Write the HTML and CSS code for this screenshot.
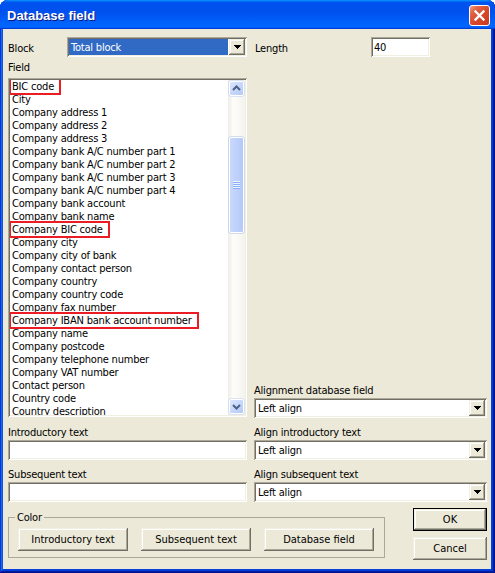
FILE: index.html
```html
<!DOCTYPE html>
<html>
<head>
<meta charset="utf-8">
<title>Database field</title>
<link rel="stylesheet" href="styles.css">
</head>
<body>
<div class="window">
  <div class="titlebar">
    <span class="title">Database field</span>
    <span class="close"><svg width="19" height="19" viewBox="0 0 19 19"><path d="M5.5 5.5L13.5 13.5M13.5 5.5L5.5 13.5" stroke="#fff" stroke-width="2.3" stroke-linecap="square" fill="none"/></svg></span>
  </div>
  <div class="body">
    <div class="grid">
      <div class="cell row-top">
        <span class="label block-label">Block</span>
        <div class="combo block-combo"><span class="combo-text sel">Total block</span><span class="drop"><svg width="7" height="4" viewBox="0 0 7 4" shape-rendering="crispEdges"><path d="M0 0h7v1h-1v1h-1v1h-1v1h-1v-1h-1v-1h-1v-1h-1z"/></svg></span></div>
      </div>
      <div class="cell row-top">
        <span class="label length-label">Length</span>
        <div class="edit length-edit">40</div>
      </div>

      <div class="cell field-cell">
        <span class="label">Field</span>
        <div class="list">
          <div class="items">
            <div class="item"><span class="mark">BIC code</span></div>
            <div class="item">City</div>
            <div class="item">Company address 1</div>
            <div class="item">Company address 2</div>
            <div class="item">Company address 3</div>
            <div class="item">Company bank A/C number part 1</div>
            <div class="item">Company bank A/C number part 2</div>
            <div class="item">Company bank A/C number part 3</div>
            <div class="item">Company bank A/C number part 4</div>
            <div class="item">Company bank account</div>
            <div class="item">Company bank name</div>
            <div class="item"><span class="mark">Company BIC code</span></div>
            <div class="item">Company city</div>
            <div class="item">Company city of bank</div>
            <div class="item">Company contact person</div>
            <div class="item">Company country</div>
            <div class="item">Company country code</div>
            <div class="item">Company fax number</div>
            <div class="item"><span class="mark">Company IBAN bank account number</span></div>
            <div class="item">Company name</div>
            <div class="item">Company postcode</div>
            <div class="item">Company telephone number</div>
            <div class="item">Company VAT number</div>
            <div class="item">Contact person</div>
            <div class="item">Country code</div>
            <div class="item">Country description</div>
          </div>
          <div class="vscroll">
            <span class="sb-btn"><svg width="13" height="13" viewBox="0 0 13 13"><path d="M3 8L6.5 4.5L10 8" stroke="#4D6185" stroke-width="2" fill="none"/></svg></span>
            <span class="thumb"><span class="grip"></span></span>
            <span class="sb-btn sb-down"><svg width="13" height="13" viewBox="0 0 13 13"><path d="M3 5L6.5 8.5L10 5" stroke="#4D6185" stroke-width="2" fill="none"/></svg></span>
          </div>
        </div>
      </div>
      <div class="cell align-cell">
        <span class="label">Alignment database field</span>
        <div class="combo"><span class="combo-text">Left align</span><span class="drop"><svg width="7" height="4" viewBox="0 0 7 4" shape-rendering="crispEdges"><path d="M0 0h7v1h-1v1h-1v1h-1v1h-1v-1h-1v-1h-1v-1h-1z"/></svg></span></div>
      </div>

      <div class="cell pair">
        <span class="label">Introductory text</span>
        <div class="edit"></div>
      </div>
      <div class="cell pair">
        <span class="label">Align introductory text</span>
        <div class="combo"><span class="combo-text">Left align</span><span class="drop"><svg width="7" height="4" viewBox="0 0 7 4" shape-rendering="crispEdges"><path d="M0 0h7v1h-1v1h-1v1h-1v1h-1v-1h-1v-1h-1v-1h-1z"/></svg></span></div>
      </div>

      <div class="cell pair">
        <span class="label">Subsequent text</span>
        <div class="edit"></div>
      </div>
      <div class="cell pair">
        <span class="label">Align subsequent text</span>
        <div class="combo"><span class="combo-text">Left align</span><span class="drop"><svg width="7" height="4" viewBox="0 0 7 4" shape-rendering="crispEdges"><path d="M0 0h7v1h-1v1h-1v1h-1v1h-1v-1h-1v-1h-1v-1h-1z"/></svg></span></div>
      </div>
    </div>

    <div class="footer">
      <fieldset class="group">
        <legend>Color</legend>
        <button class="btn wide">Introductory text</button>
        <button class="btn wide">Subsequent text</button>
        <button class="btn wide">Database field</button>
      </fieldset>
      <div class="dlg-buttons">
        <button class="btn default">OK</button>
        <button class="btn">Cancel</button>
      </div>
    </div>
  </div>
</div>
</body>
</html>
```

FILE: styles.css
```css
* { box-sizing: border-box; }
html, body { margin: 0; padding: 0; background: #fff; }
body {
  font-family: "DejaVu Sans Condensed", "Liberation Sans", sans-serif;
  font-size: 11px;
  line-height: 13px;
  letter-spacing: -0.2px;
  color: #000;
}

.window {
  width: 495px;
  height: 573px;
  display: flex;
  flex-direction: column;
  padding: 0 4px 4px 3px;
  background: #0842DA;
  border-radius: 8px 8px 0 0;
  box-shadow: inset -1px -1px #00138c, inset 1px 1px #0831d9,
              inset -2px -2px #001ea0, inset 2px 2px #166aee,
              inset -3px -3px #003bda, inset 3px 3px #0855dd;
}

.titlebar {
  height: 29px;
  flex: none;
  margin: 0 -4px 0 -3px;
  padding: 2px 5px 0 7px;
  display: flex;
  align-items: center;
  justify-content: space-between;
  border-radius: 8px 8px 0 0;
  background: linear-gradient(180deg, #0997ff, #0053ee 8%, #0050ee 40%, #0066ff 88%, #0066ff 93%, #005bff 95%, #003dd7 96%, #003dd7);
}
.title {
  font-family: "Liberation Sans", sans-serif;
  font-weight: bold;
  font-size: 13px;
  letter-spacing: 0;
  color: #fff;
  text-shadow: 1px 1px #0A1883;
}
.close {
  width: 21px;
  height: 21px;
  border: 1px solid #fff;
  border-radius: 3px;
  display: flex;
  align-items: center;
  justify-content: center;
  background: linear-gradient(135deg, #F0A088 0%, #E2664A 22%, #D9472B 55%, #C53A1F 100%);
}
.close svg { display: block; }

.body {
  flex: 1;
  background: #ECE9D8;
  padding: 8px 0 0 5px;
}

.grid {
  display: grid;
  grid-template-columns: 239px 233px;
  column-gap: 7px;
}
.cell { display: flex; flex-direction: column; }
.label { display: block; height: 13px; padding-top: 1px; line-height: 13px; white-space: nowrap; }

.row-top { flex-direction: row; align-items: center; height: 20px; }
.block-label { width: 59px; }
.block-combo { width: 180px; }
.length-label { width: 117px; padding-left: 1px; }
.length-edit { width: 59px; }

.field-cell { margin-top: 3px; }
.align-cell { align-self: end; }
.align-cell .label { margin-bottom: 2px; }
.pair { margin-top: 7px; }
.pair .label { margin-bottom: 2px; }

.edit, .combo, .list {
  background: #fff;
  box-shadow: inset 1px 1px #ACA899, inset -1px -1px #fff,
              inset 2px 2px #716F64, inset -2px -2px #F1EFE2;
}
.edit {
  height: 20px;
  padding: 2px 0 0 3px;
  line-height: 17px;
}
.combo {
  height: 20px;
  display: flex;
  padding: 2px;
}
.combo-text {
  flex: 1;
  padding-left: 2px;
  line-height: 17px;
  white-space: nowrap;
}
.combo-text.sel {
  background: #316AC5;
  color: #fff;
  margin-right: 1px;
}
.drop {
  width: 16px;
  height: 16px;
  flex: none;
  display: flex;
  align-items: center;
  justify-content: center;
  background: #ECE9D8;
  box-shadow: inset -1px -1px #716F64, inset 1px 1px #F1EFE2,
              inset -2px -2px #ACA899, inset 2px 2px #fff;
}
.drop svg { display: block; fill: #000; }

.list {
  margin-top: 5px;
  margin-bottom: 1px;
  height: 339px;
  padding: 2px;
  display: flex;
}
.items {
  flex: 1;
  overflow: hidden;
  padding-left: 2px;
}
.item { height: 13px; line-height: 14px; white-space: nowrap; }
.mark {
  display: inline-block;
  height: 13px;
  outline: 2px solid #EC1C24;
  padding: 0 5px 0 1px;
  margin-left: -1px;
}

.vscroll {
  width: 17px;
  flex: none;
  display: flex;
  flex-direction: column;
  background: linear-gradient(90deg, #EEEDE5, #FDFDFA 30%, #F4F3EE);
}
.sb-btn {
  width: 15px;
  height: 15px;
  margin: 1px 1px 0 1px;
  display: flex;
  align-items: center;
  justify-content: center;
  border-radius: 2px;
  border: 1px solid #fff;
  background: linear-gradient(135deg, #DCE6FD, #C5D6FB 55%, #B4C9F6);
  box-shadow: 0 0 0 0.5px #B9CCF2;
}
.sb-btn svg { display: block; }
.sb-down { margin-top: auto; margin-bottom: 1px; }
.thumb {
  margin: 41px 1px 0 1px;
  height: 96px;
  display: flex;
  align-items: center;
  justify-content: center;
  border-radius: 2px;
  border: 1px solid #fff;
  background: linear-gradient(90deg, #C9D8FC, #BDD0FB 60%, #B4C8F6);
  box-shadow: 0 0 0 0.5px #A9BEEB;
}
.grip {
  width: 7px;
  height: 8px;
  background: repeating-linear-gradient(180deg, #EEF4FE 0 1px, #8CB0F8 1px 2px);
}

.footer {
  display: flex;
  align-items: flex-start;
  margin-top: 6px;
}
.group {
  width: 377px;
  margin: 3px 0 0 0;
  padding: 4px 0 6px 9px;
  border: 1px solid #ACA899;
  display: flex;
  gap: 13px;
  min-inline-size: 0;
}
.group legend {
  padding: 0 2px;
  margin-left: -3px;
  line-height: 13px;
  height: 13px;
}
.btn {
  font: inherit;
  color: #000;
  height: 23px;
  padding: 0;
  border: none;
  background: #ECE9D8;
  box-shadow: inset -1px -1px #716F64, inset 1px 1px #F1EFE2,
              inset -2px -2px #ACA899, inset 2px 2px #fff;
}
.btn.wide { width: 110px; }
.dlg-buttons {
  display: flex;
  flex-direction: column;
  gap: 6px;
  width: 74px;
  margin-left: 28px;
}
.dlg-buttons .btn { width: 74px; }
.btn.default { border: 1px solid #000; }
```
